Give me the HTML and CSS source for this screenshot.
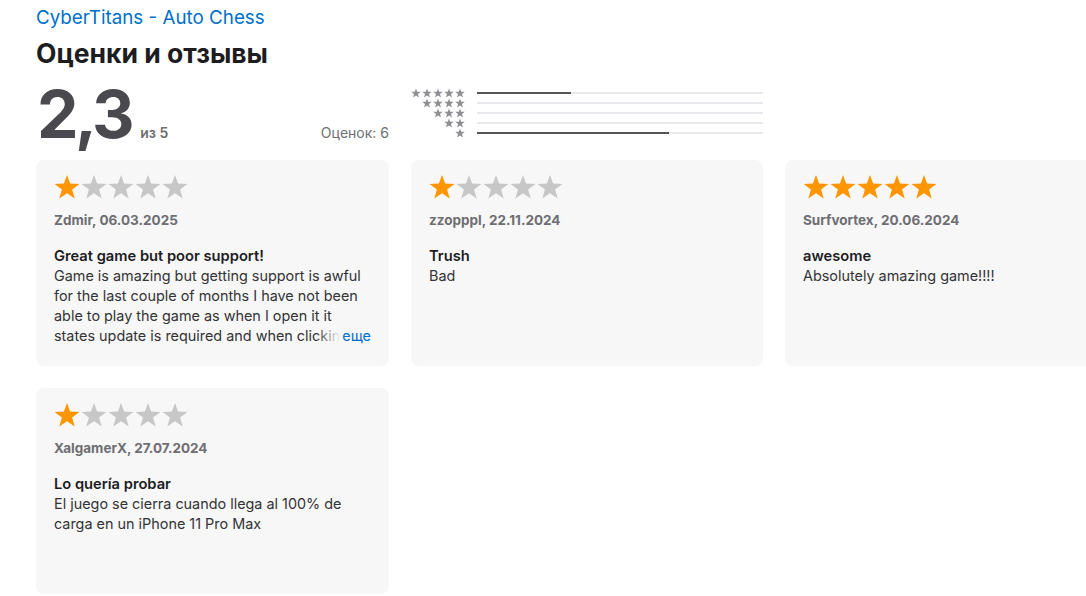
FILE: index.html
```html
<!DOCTYPE html>
<html lang="ru">
    <head>
        <meta charset="utf-8">
        <title>CyberTitans - Auto Chess: Оценки и отзывы</title>
        <link rel="stylesheet" href="styles.css">
    </head>
    <body>

<!-- star shape reused by every rating -->
<svg width="0" height="0" class="defs">
    <defs>
        <symbol id="star" viewBox="0 0 26 26">
            <polygon points="13,1 16.1,9.6 25.4,9.9 18.1,15.6 20.7,24.6 13,19.3 5.3,24.6 7.9,15.6 0.6,9.9 9.9,9.6"/>
        </symbol>
    </defs>
</svg>

<div class="page">
    <a class="app-name" href="#">CyberTitans - Auto Chess</a>
    <h2 class="section-title">Оценки и отзывы</h2>

    <div class="summary">
        <div class="score">
            <span class="score-value">2,3</span>
            <span class="score-max">из 5</span>
            <span class="score-count">Оценок: 6</span>
        </div>
        <div class="histogram">
            <div class="hist-row">
                <span class="hist-stars"><svg><use href="#star"/></svg><svg><use href="#star"/></svg><svg><use href="#star"/></svg><svg><use href="#star"/></svg><svg><use href="#star"/></svg></span>
                <span class="hist-bar"><i style="width: 33%"></i></span>
            </div>
            <div class="hist-row">
                <span class="hist-stars"><svg><use href="#star"/></svg><svg><use href="#star"/></svg><svg><use href="#star"/></svg><svg><use href="#star"/></svg></span>
                <span class="hist-bar"><i style="width: 0%"></i></span>
            </div>
            <div class="hist-row">
                <span class="hist-stars"><svg><use href="#star"/></svg><svg><use href="#star"/></svg><svg><use href="#star"/></svg></span>
                <span class="hist-bar"><i style="width: 0%"></i></span>
            </div>
            <div class="hist-row">
                <span class="hist-stars"><svg><use href="#star"/></svg><svg><use href="#star"/></svg></span>
                <span class="hist-bar"><i style="width: 0%"></i></span>
            </div>
            <div class="hist-row">
                <span class="hist-stars"><svg><use href="#star"/></svg></span>
                <span class="hist-bar"><i style="width: 67%"></i></span>
            </div>
        </div>
    </div>

    <div class="reviews">
        <div class="review">
            <div class="stars">
                <svg class="on"><use href="#star"/></svg><svg><use href="#star"/></svg><svg><use href="#star"/></svg><svg><use href="#star"/></svg><svg><use href="#star"/></svg>
            </div>
            <div class="author">Zdmir, 06.03.2025</div>
            <div class="review-title">Great game but poor support!</div>
            <div class="review-body clamped">
                Game is amazing but getting support is awful for the last couple of months I have not been able to play the game as when I open it it states update is required and when clicking on update nothing happens
                <a class="more" href="#">еще</a>
            </div>
        </div>

        <div class="review">
            <div class="stars">
                <svg class="on"><use href="#star"/></svg><svg><use href="#star"/></svg><svg><use href="#star"/></svg><svg><use href="#star"/></svg><svg><use href="#star"/></svg>
            </div>
            <div class="author">zzopppl, 22.11.2024</div>
            <div class="review-title">Trush</div>
            <div class="review-body">Bad</div>
        </div>

        <div class="review">
            <div class="stars">
                <svg class="on"><use href="#star"/></svg><svg class="on"><use href="#star"/></svg><svg class="on"><use href="#star"/></svg><svg class="on"><use href="#star"/></svg><svg class="on"><use href="#star"/></svg>
            </div>
            <div class="author">Surfvortex, 20.06.2024</div>
            <div class="review-title">awesome</div>
            <div class="review-body">Absolutely amazing game!!!!</div>
        </div>

        <div class="review">
            <div class="stars">
                <svg class="on"><use href="#star"/></svg><svg><use href="#star"/></svg><svg><use href="#star"/></svg><svg><use href="#star"/></svg><svg><use href="#star"/></svg>
            </div>
            <div class="author">XalgamerX, 27.07.2024</div>
            <div class="review-title">Lo quería probar</div>
            <div class="review-body">El juego se cierra cuando llega al 100% de carga en un iPhone 11 Pro Max</div>
        </div>
    </div>
</div>

    </body>
</html>
```

FILE: styles.css
```css
body {
    margin: 0;
    font-family: Inter, "Noto Sans", sans-serif;
    color: #1d1d1f;
    background: #fff;
    overflow: hidden;
}
.defs { position: absolute; }
.page {
    padding: 5px 0 0 36px;
    width: 1110px;
}
.app-name {
    display: block;
    font-size: 18.8px;
    line-height: 26px;
    color: #0070c9;
    text-decoration: none;
}
.section-title {
    margin: 7px 0 0;
    font-size: 26.5px;
    line-height: 30px;
    font-weight: 700;
}

/* rating summary */
.summary {
    display: grid;
    grid-template-columns: 353px 352px;
    column-gap: 22px;
    margin-top: 14px;
    height: 68px;
}
.score {
    display: flex;
    align-items: baseline;
}
.score-value {
    font-size: 66px;
    line-height: 64px;
    font-weight: 700;
    letter-spacing: -3.5px;
    color: #4a4a4e;
    margin-left: 1px;
}
.score-max {
    margin-left: 9px;
    font-size: 14px;
    font-weight: 600;
    color: #6e6e73;
}
.score-count {
    margin-left: auto;
    font-size: 14px;
    color: #6e6e73;
}
.histogram {
    padding-top: 6px;
}
.hist-row {
    display: flex;
    align-items: center;
    height: 10px;
}
.hist-stars {
    display: flex;
    justify-content: flex-end;
    gap: 1px;
    width: 54px;
}
.hist-stars svg {
    width: 10px;
    height: 10px;
    fill: #8e8e93;
}
.hist-bar {
    margin-left: 12px;
    flex: 1;
    height: 2px;
    background: #e8e8ed;
}
.hist-bar i {
    display: block;
    height: 2px;
    background: #555558;
}

/* reviews */
.reviews {
    display: grid;
    grid-template-columns: 353px 352px 352px;
    gap: 22px;
    margin-top: 10px;
}
.review {
    height: 206px;
    box-sizing: border-box;
    padding: 14px 18px 0;
    background: #f7f7f7;
    border-radius: 8px;
}
.stars {
    display: flex;
    gap: 1px;
    height: 26px;
}
.stars svg {
    width: 26px;
    height: 26px;
    fill: #c7c7c7;
}
.stars svg.on { fill: #ff9500; }
.author {
    margin-top: 11px;
    font-size: 13.5px;
    line-height: 18px;
    font-weight: 700;
    color: #6e6e73;
}
.review-title {
    margin-top: 17px;
    font-size: 14.7px;
    line-height: 20px;
    font-weight: 600;
}
.review-body {
    font-size: 14.4px;
    line-height: 20px;
    color: #333336;
}
.clamped {
    position: relative;
    max-height: 80px;
    overflow: hidden;
}
.more {
    position: absolute;
    right: 0;
    bottom: 0;
    padding-left: 26px;
    line-height: 20px;
    color: #0070c9;
    text-decoration: none;
    background: linear-gradient(to right, rgba(247,247,247,0), #f7f7f7 24px);
}
```
